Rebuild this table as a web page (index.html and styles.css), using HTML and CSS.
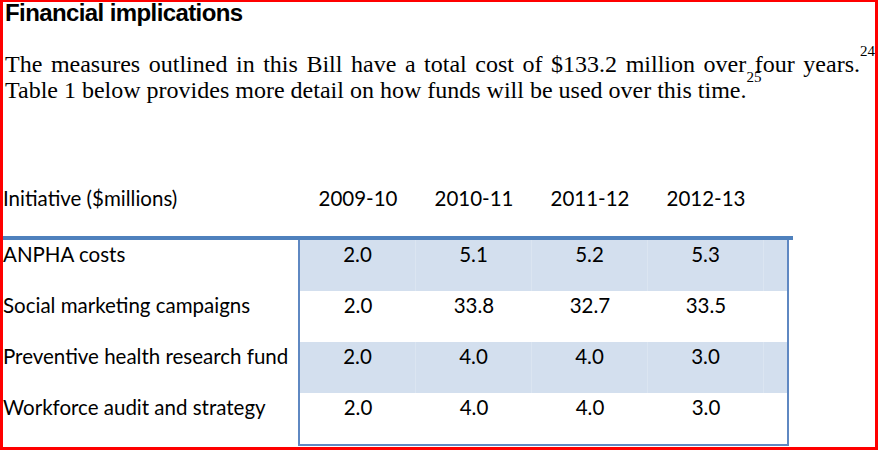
FILE: index.html
```html
<!DOCTYPE html>
<html>
<head>
<meta charset="utf-8">
<link rel="stylesheet" href="styles.css">
</head>
<body>
<div class="frame">
  <h1 class="title">Financial implications</h1>
  <p class="para">The measures outlined in this Bill have a total cost of $133.2 million over four years.<sup class="fn">24</sup> Table 1 below provides more detail on how funds will be used over this time.<sup class="fn">25</sup></p>
  <div class="table">
    <div class="row head">
      <div class="label">Initiative ($millions)</div>
      <div class="vals"><span>2009-10</span><span>2010-11</span><span>2011-12</span><span>2012-13</span></div>
    </div>
    <div class="rule"></div>
    <div class="row shaded">
      <div class="label">ANPHA costs</div>
      <div class="vals"><span>2.0</span><span>5.1</span><span>5.2</span><span>5.3</span></div>
    </div>
    <div class="row">
      <div class="label">Social marketing campaigns</div>
      <div class="vals"><span>2.0</span><span>33.8</span><span>32.7</span><span>33.5</span></div>
    </div>
    <div class="row shaded">
      <div class="label">Preventive health research fund</div>
      <div class="vals"><span>2.0</span><span>4.0</span><span>4.0</span><span>3.0</span></div>
    </div>
    <div class="row last">
      <div class="label">Workforce audit and strategy</div>
      <div class="vals"><span>2.0</span><span>4.0</span><span>4.0</span><span>3.0</span></div>
    </div>
  </div>
</div>
</body>
</html>
```
FILE: styles.css
```css
html, body {
  margin: 0;
  padding: 0;
  background: #fff;
}
.frame {
  box-sizing: border-box;
  width: 878px;
  height: 450px;
  border: 3px solid #f00;
  border-top-width: 2px;
  overflow: hidden;
  color: #000;
}
.title {
  margin: 0;
  padding-left: 2px;
  font-family: "Liberation Sans", Arial, sans-serif;
  font-weight: bold;
  font-size: 24px;
  letter-spacing: -0.6px;
  line-height: 22px;
}
.para {
  margin: 27px 0 0 2px;
  font-family: "Liberation Serif", "Times New Roman", serif;
  font-size: 24px;
  line-height: 26px;
  text-align: justify;
}
.fn {
  font-size: 15px;
  vertical-align: baseline;
  position: relative;
  top: -16px;
  line-height: 0;
}
.table {
  width: 790px;
  margin-top: 81px;
  font-family: Lato, "Open Sans", sans-serif;
  font-size: 20.5px;
  line-height: 24px;
}
.row {
  display: flex;
  height: 51px;
}
.row.head {
  height: 52px;
}
.label {
  box-sizing: border-box;
  width: 295px;
  padding-top: 2px;
  white-space: nowrap;
}
.vals {
  box-sizing: border-box;
  width: 491px;
  display: flex;
  border-left: 2px solid #5f88c2;
  border-right: 2px solid #5f88c2;
}
.head .vals {
  border-color: transparent;
}
.vals span {
  box-sizing: border-box;
  width: 116px;
  text-align: center;
  padding-top: 2px;
}
.shaded .vals {
  background: #d3dfee;
}
.shaded .vals span {
  border-right: 1px solid #dbe5f1;
}
.row.last {
  height: 53px;
}
.last .vals {
  border-bottom: 2px solid #5f88c2;
}
.rule {
  height: 4px;
  background: #4f81bd;
}
```
